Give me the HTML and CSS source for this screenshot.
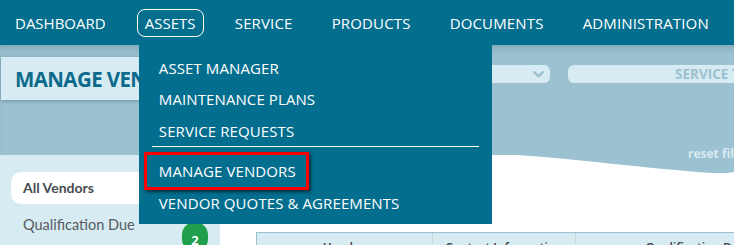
FILE: index.html
```html
<!DOCTYPE html>
<html lang="en">
<head>
<meta charset="utf-8">
<title>Manage Vendors</title>
<link rel="stylesheet" href="styles.css">
</head>
<body>
<div class="page">
  <header class="nav">
    <div class="nav-item">DASHBOARD</div>
    <div class="nav-item current">ASSETS
      <div class="menu">
        <div class="menu-item">ASSET MANAGER</div>
        <div class="menu-item">MAINTENANCE PLANS</div>
        <div class="menu-item">SERVICE REQUESTS</div>
        <div class="menu-sep"></div>
        <div class="menu-item marked">MANAGE VENDORS</div>
        <div class="menu-item last">VENDOR QUOTES &amp; AGREEMENTS</div>
      </div>
    </div>
    <div class="nav-item">SERVICE</div>
    <div class="nav-item">PRODUCTS</div>
    <div class="nav-item">DOCUMENTS</div>
    <div class="nav-item">ADMINISTRATION</div>
  </header>

  <section class="band">
    <div class="band-top">
      <div class="title-box"><h1 class="title">MANAGE VENDORS</h1></div>
      <div class="filters">
        <div class="select sel1">
          <svg class="chev" width="11" height="7" viewBox="0 0 11 7"><path d="M1.2 1.2 L5.5 5.3 L9.8 1.2" fill="none" stroke="#9cc1d0" stroke-width="2.4" stroke-linecap="round" stroke-linejoin="round"/></svg>
        </div>
        <div class="select sel2">SERVICE TYPE</div>
      </div>
    </div>
    <div class="reset">reset filters</div>
  </section>

  <div class="below">
    <aside class="sidebar">
      <div class="side-item active">All Vendors</div>
      <div class="side-item row">
        <span class="side-label">Qualification Due</span>
        <span class="badge">2</span>
      </div>
    </aside>
    <main class="content">
      <svg class="wave" width="560" height="20" viewBox="0 0 560 20"><path d="M0 0 H297 C350 3 430 14 493 18 C503 19 508 18 514 17 C530 16 545 15 560 15 V20 H0 Z" fill="#ffffff"/></svg>
      <div class="content-body">
        <table class="grid">
          <thead>
            <tr>
              <th class="c1">Vendor</th>
              <th class="c2">Contact Information</th>
              <th class="c3">Qualification Due</th>
            </tr>
          </thead>
        </table>
      </div>
    </main>
  </div>
</div>
</body>
</html>
```

FILE: styles.css
```css
html, body {
  margin: 0;
  padding: 0;
  overflow: hidden;
  background: #ffffff;
}

.page {
  width: 780px;
  height: 245px;
  overflow: hidden;
  font-family: "Open Sans", "Liberation Sans", sans-serif;
}

/* ---------- top navigation ---------- */
.nav {
  position: relative;
  z-index: 10;
  height: 45px;
  background: #036e8e;
  display: flex;
  align-items: center;
  gap: 23.2px;
  padding-left: 7px;
  box-sizing: border-box;
}

.nav-item {
  position: relative;
  color: #ffffff;
  font-size: 15px;
  line-height: 20px;
  padding: 3px 7px;
  border: 1px solid transparent;
  border-radius: 8px;
  white-space: nowrap;
}

.nav-item.current ~ .nav-item {
  letter-spacing: 0.14px;
}

.nav-item.current {
  border-color: #ffffff;
}

/* ---------- dropdown ---------- */
.menu {
  position: absolute;
  left: 1px;
  top: calc(100% + 8px);
  width: 353px;
  box-sizing: border-box;
  padding: 9px 0 4.5px;
  background: #036e8e;
}

.menu-item {
  color: #ffffff;
  font-size: 15px;
  line-height: 31.5px;
  padding-left: 20px;
  white-space: nowrap;
  letter-spacing: 0.1px;
}

.menu-sep {
  height: 1px;
  background: #ffffff;
  margin: -1.5px 13px 0;
}

.menu-item.marked {
  width: fit-content;
  margin: 5px 0 0 5px;
  padding: 0 10px 0 12px;
  line-height: 32px;
  border: 3px solid #ff0000;
  box-shadow: 2px 2px 3px rgba(0, 0, 0, 0.55);
}

.menu-item.last {
  margin-top: -2px;
}

/* ---------- filter band ---------- */
.band {
  height: 128px;
  box-sizing: border-box;
  padding-top: 12px;
  background: #9cc1d0;
  box-shadow: inset 0 7px 8px -5px rgba(0, 40, 60, 0.22);
}

.band-top {
  display: flex;
  align-items: flex-start;
  height: 43px;
}

.title-box {
  width: 300px;
  height: 43px;
  margin-left: 1px;
  background: #d7ebf2;
  box-shadow: 0 1px 4px rgba(0, 40, 60, 0.3);
  display: flex;
  align-items: center;
  padding-left: 14px;
  box-sizing: border-box;
}

.title {
  margin: 0;
  font-size: 20.5px;
  font-weight: 700;
  line-height: 28px;
  letter-spacing: -0.6px;
  color: #0c6a8b;
  white-space: nowrap;
}

.filters {
  display: flex;
  gap: 18px;
  margin-left: 89px;
  margin-top: 8px;
}

.select {
  height: 18px;
  border-radius: 6px;
  background: #d7ebf2;
  display: flex;
  align-items: center;
  box-sizing: border-box;
}

.sel1 {
  width: 160px;
  justify-content: flex-end;
  padding-right: 6px;
}

.chev {
  display: block;
}

.sel2 {
  width: 210px;
  padding-left: 107px;
  font-size: 13.5px;
  font-weight: 700;
  color: #9cc1d0;
  white-space: nowrap;
  line-height: 18px;
}

.reset {
  margin-top: 46px;
  padding-left: 688px;
  font-size: 12px;
  font-weight: 700;
  line-height: 16px;
  color: #d7ebf2;
  white-space: nowrap;
}

/* ---------- lower area ---------- */
.below {
  position: relative;
  display: flex;
  margin-top: -18px;
}

.sidebar {
  width: 220px;
  flex: none;
  height: 120px;
  background: #d7ebf2;
  padding: 17px 11px 0;
  box-sizing: border-box;
  font-family: Lato, "Open Sans", sans-serif;
}

.side-item {
  color: #555b60;
  font-size: 14.5px;
  line-height: 20px;
}

.side-item.active {
  background: #ffffff;
  border-radius: 10px;
  padding-left: 12px;
  font-weight: 700;
  font-size: 14px;
  line-height: 32px;
  color: #464c52;
}

.side-item.row {
  display: flex;
  align-items: flex-start;
  justify-content: space-between;
  margin-top: 11px;
  padding-left: 12px;
  padding-right: 1px;
}

.badge {
  margin-top: 7px;
  min-width: 26px;
  height: 30px;
  box-sizing: border-box;
  padding-top: 8px;
  border-radius: 13px;
  background: #1f9e4b;
  color: #ffffff;
  font-family: "Open Sans", sans-serif;
  font-weight: 700;
  font-size: 13px;
  line-height: 20px;
  text-align: center;
}

.content {
  flex: 1;
  min-width: 0;
}

.wave {
  display: block;
}

.content-body {
  background: #ffffff;
  height: 120px;
  padding: 57px 0 0 36px;
  box-sizing: border-box;
}

.grid {
  border-collapse: collapse;
  width: 560px;
  table-layout: fixed;
}

.grid th {
  background: #d7ebf2;
  border-top: 1px solid #9cc1d0;
  border-left: 1px solid #c9d9df;
  padding: 7px 0 7px;
  font-size: 12px;
  line-height: 16px;
  font-weight: 600;
  color: #3a4247;
  text-align: center;
}

.grid th.c1 {
  width: 175px;
  border-left-color: #9cc1d0;
}

.grid th.c2 {
  width: 142px;
}
```
